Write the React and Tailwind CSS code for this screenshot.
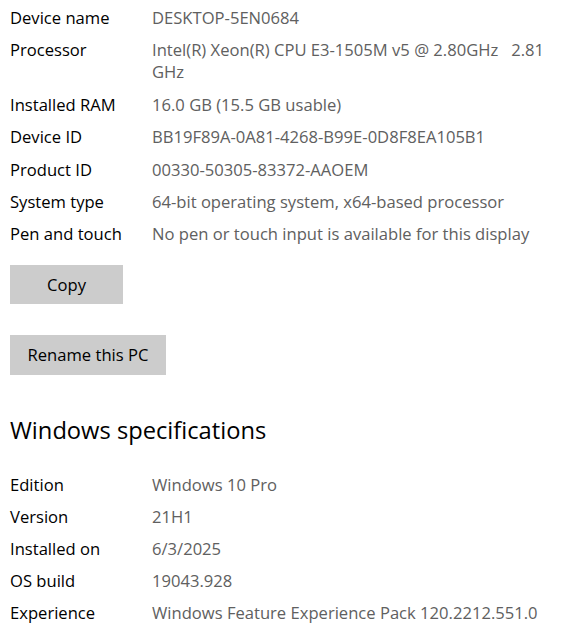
const deviceSpecs = [
  { label: 'Device name', value: 'DESKTOP-5EN0684' },
  { label: 'Processor', value: 'Intel(R) Xeon(R) CPU E3-1505M v5 @ 2.80GHz\u00a0\u00a0\u00a02.81 GHz' },
  { label: 'Installed RAM', value: '16.0 GB (15.5 GB usable)' },
  { label: 'Device ID', value: 'BB19F89A-0A81-4268-B99E-0D8F8EA105B1' },
  { label: 'Product ID', value: '00330-50305-83372-AAOEM' },
  { label: 'System type', value: '64-bit operating system, x64-based processor' },
  { label: 'Pen and touch', value: 'No pen or touch input is available for this display' },
];

const windowsSpecs = [
  { label: 'Edition', value: 'Windows 10 Pro' },
  { label: 'Version', value: '21H1' },
  { label: 'Installed on', value: '6/3/2025' },
  { label: 'OS build', value: '19043.928' },
  { label: 'Experience', value: 'Windows Feature Experience Pack 120.2212.551.0' },
];

const SpecRow = ({ label, value, gap }) => (
  <div className={`flex ${gap}`}>
    <div className="w-[142px] shrink-0 text-black">{label}</div>
    <div className="flex-1 text-[#606060]">{value}</div>
  </div>
);

export default function App() {
  return (
    <div
      className="bg-white w-[563px] min-h-[628px] pl-[10px] pr-[6px] pt-[7px] text-[16.6px] leading-[22px]"
      style={{ fontFamily: '"Open Sans", "Noto Sans", sans-serif' }}
    >
      {deviceSpecs.map((row) => (
        <SpecRow key={row.label} gap="mb-[10.4px]" {...row} />
      ))}

      <button className="mt-[9.6px] w-[113px] h-[39px] bg-[#cccccc] text-black">Copy</button>
      <div>
        <button className="mt-[31px] w-[156px] h-[40px] bg-[#cccccc] text-black">Rename this PC</button>
      </div>

      <h2 className="mt-[39px] mb-[28px] text-[23.7px] leading-[32px] text-black">Windows specifications</h2>

      {windowsSpecs.map((row) => (
        <SpecRow key={row.label} gap="mb-[10px]" {...row} />
      ))}
    </div>
  );
}
